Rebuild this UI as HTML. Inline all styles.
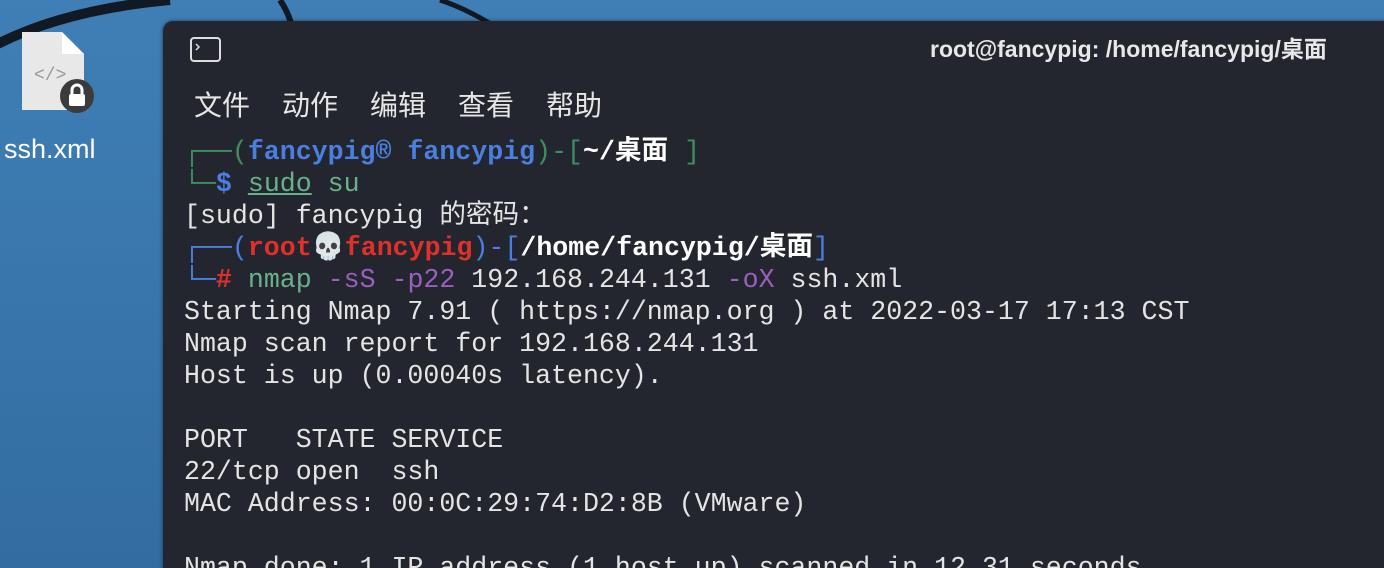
<!DOCTYPE html>
<html><head><meta charset="utf-8"><style>
html,body{margin:0;width:1384px;height:568px;overflow:hidden}
body{background:linear-gradient(180deg,#3f7fb5 0%,#3a78ae 40%,#336ca0 100%);position:relative;font-family:"Liberation Sans","Noto Sans CJK SC",sans-serif}
.win{position:absolute;left:163px;top:21px;width:1240px;height:560px;background:#23262e;border-radius:10px 0 0 0;box-shadow:0 0 4px rgba(0,0,0,.5)}
.title{position:absolute;left:930px;top:30px;color:#e8e8e8;font-size:23px;font-weight:bold}
.menu{position:absolute;left:194px;top:84px;color:#e6e6e6;font-size:28px;white-space:nowrap}
.menu span{display:inline-block;width:88px}
.term{position:absolute;left:184px;top:136px;font-family:"Liberation Mono","Noto Sans CJK SC",monospace;font-size:26.6px;line-height:32px;color:#e4e4e4;white-space:pre}
.g{color:#3d8f5f}.b{color:#4a7fe0;font-weight:bold}.r{color:#e0302a;font-weight:bold}.w{color:#fff;font-weight:bold}.p{color:#9b5fc0}.gr{color:#67b28a}.bl{color:#4a7fe0}
</style></head><body>
<svg style="position:absolute;left:0;top:0" width="600" height="80">
<path d="M-10 48 Q60 10 170 0" stroke="#111a24" stroke-width="10" fill="none"/>
<path d="M280 0 Q300 30 290 60" stroke="#111a24" stroke-width="6" fill="none"/>
<path d="M440 0 Q470 10 500 30" stroke="#111a24" stroke-width="5" fill="none"/>
</svg>
<svg style="position:absolute;left:20px;top:30px" width="80" height="90" viewBox="0 0 80 90">
<path d="M2 2h40l22 22v56H2z" fill="#e8e8e8"/><path d="M42 2v22h22z" fill="#fff"/>
<text x="14" y="50" font-size="18" fill="#999" font-family="Liberation Mono">&lt;/&gt;</text>
<circle cx="57" cy="66" r="17" fill="#3b3b3b"/><rect x="49" y="64" width="16" height="12" rx="2" fill="#fff"/><path d="M52 64v-4a5 5 0 0 1 10 0v4" stroke="#fff" stroke-width="3" fill="none"/>
</svg>
<div style="position:absolute;left:4px;top:134px;color:#fff;font-size:27px">ssh.xml</div>
<div class="win"></div>
<svg style="position:absolute;left:190px;top:37px" width="32" height="26"><rect x="1" y="1" width="29" height="23" rx="3" fill="none" stroke="#ddd" stroke-width="2"/><path d="M6 7l3 3-3 3" stroke="#ddd" fill="none" stroke-width="1.5"/></svg>
<div class="title">root@fancypig: /home/fancypig/桌面</div>
<div class="menu"><span>文件</span><span>动作</span><span>编辑</span><span>查看</span><span>帮助</span></div>
<div class="term"><span class="g">┌──(</span><span class="b">fancypig® fancypig</span><span class="g">)-[</span><span class="w">~/桌面 </span><span class="g">]</span>
<span class="g">└─</span><span class="b">$</span> <span class="gr" style="text-decoration:underline">sudo</span> <span class="gr">su</span>
[sudo] fancypig 的密码：
<span class="bl">┌──(</span><span class="r">root💀fancypig</span><span class="bl">)-[</span><span class="w">/home/fancypig/桌面</span><span class="bl">]</span>
<span class="bl">└─</span><span class="r">#</span> <span class="gr">nmap</span> <span class="p">-sS -p22</span> 192.168.244.131 <span class="p">-oX</span> ssh.xml
Starting Nmap 7.91 ( https://nmap.org ) at 2022-03-17 17:13 CST
Nmap scan report for 192.168.244.131
Host is up (0.00040s latency).

PORT   STATE SERVICE
22/tcp open  ssh
MAC Address: 00:0C:29:74:D2:8B (VMware)

Nmap done: 1 IP address (1 host up) scanned in 12.31 seconds</div>
</body></html>
